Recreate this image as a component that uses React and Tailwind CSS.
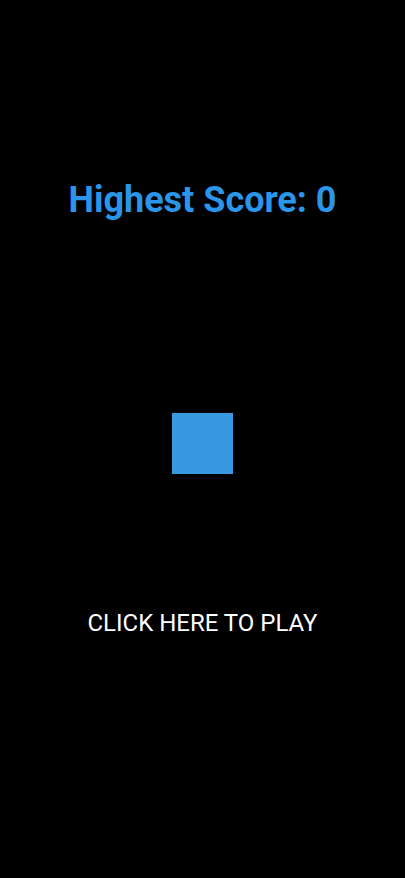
import React from 'react';

export default function App() {
  return (
    <div className="min-h-[878px] w-full bg-black flex flex-col items-center" style={{ fontFamily: 'Roboto, sans-serif' }}>
      <h1 className="mt-[176px] text-[36px] leading-[48px] font-bold text-[#2b95ea]">Highest Score: 0</h1>
      <div className="mt-[189px] w-[61px] h-[61px] bg-[#3799e0]" />
      <button className="mt-[133px] text-[24px] leading-[32px] text-white">CLICK HERE TO PLAY</button>
    </div>
  );
}
